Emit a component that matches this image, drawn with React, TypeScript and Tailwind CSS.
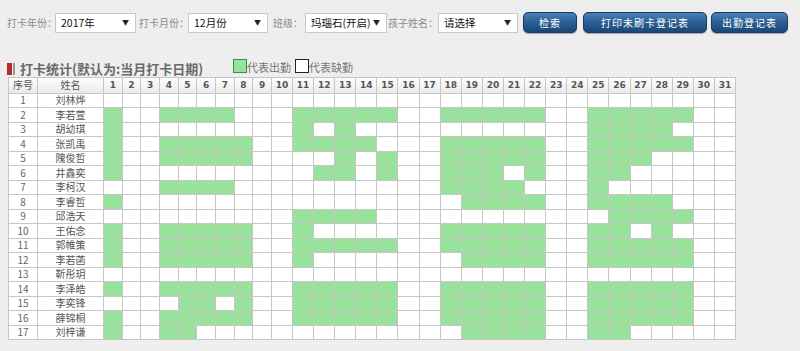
import React from "react";

const rows: [string, number[]][] = [
  ["刘林烨", []],
  ["李若萱", [1, 4, 5, 6, 7, 11, 12, 13, 14, 15, 18, 19, 20, 21, 22, 25, 26, 27, 28, 29]],
  ["胡幼琪", [1, 11, 13, 25, 26, 27, 28]],
  ["张凯禹", [1, 4, 5, 6, 7, 8, 11, 12, 13, 14, 18, 19, 20, 21, 22, 25, 26, 27, 28, 29]],
  ["隗俊哲", [1, 4, 5, 6, 7, 8, 13, 15, 18, 19, 20, 21, 22, 25, 26, 27]],
  ["井鑫奕", [1, 12, 13, 15, 18, 19, 20, 22, 25, 26]],
  ["李柯汉", [4, 5, 6, 7, 18, 19, 20, 21, 25]],
  ["李睿哲", [1, 19, 20, 21, 22, 25, 26, 27, 28]],
  ["邱浩天", [11, 12, 13, 14, 26, 27, 28, 29]],
  ["王佑念", [1, 4, 5, 6, 7, 8, 11, 18, 19, 20, 21, 22, 25, 26, 28]],
  ["郭帷策", [1, 4, 5, 6, 7, 8, 11, 12, 13, 14, 15, 18, 19, 20, 21, 22, 25, 26, 27, 28, 29]],
  ["李若菡", [1, 4, 5, 6, 7, 8, 11, 19, 20, 21, 22, 25, 26, 27, 28, 29]],
  ["靳彤玥", []],
  ["李泽皓", [1, 4, 5, 6, 7, 8, 11, 12, 13, 14, 15, 18, 19, 20, 21, 22, 25, 26, 27, 28, 29]],
  ["李奕锋", [5, 6, 8, 11, 12, 13, 14, 15, 18, 19, 20, 21, 22, 25, 26, 27, 28, 29]],
  ["薛锦桐", [1, 4, 5, 6, 7, 8, 11, 12, 13, 14, 15, 18, 19, 20, 21, 22, 25, 26, 27, 28, 29]],
  ["刘梓谦", [1, 4, 5, 19, 20, 21, 22, 25, 26]],
];

const days = Array.from({ length: 31 }, (_, i) => i + 1);

function Label({ text, width }: { text: string; width: string }) {
  return (
    <span className={`${width} shrink-0 whitespace-nowrap text-[10px] text-[#8a8a8a] leading-none`}>{text}</span>
  );
}

function Select({ value, width }: { value: string; width: string }) {
  return (
    <div
      className={`${width} shrink-0 h-[20px] bg-white border border-[#c9c9c9] flex items-center justify-between pl-[5px] pr-[6px] text-[10.5px] text-[#111] whitespace-nowrap`}
    >
      <span>{value}</span>
      <span className="text-[7px] text-[#222]">▼</span>
    </div>
  );
}

function Btn({ label, width }: { label: string; width: string }) {
  return (
    <div
      className={`${width} shrink-0 h-[21px] rounded-[5px] border border-[#1b3c63] bg-gradient-to-b from-[#4a80b8] via-[#2a5f95] to-[#1b4675] flex items-center justify-center text-white text-[10px] tracking-[1px] whitespace-nowrap shadow-[0_1px_1px_rgba(0,0,0,0.3)]`}
    >
      {label}
    </div>
  );
}

export default function App() {
  return (
    <div
      className="w-[800px] h-[351px] bg-[#eeeeee] overflow-hidden"
      style={{ fontFamily: '"Microsoft YaHei", "Noto Sans CJK SC", "Noto Sans", sans-serif' }}
    >
      <div className="flex items-center h-[21px] mt-[12px] pl-[7px]">
        <Label text="打卡年份：" width="w-[48px]" />
        <Select value="2017年" width="w-[81px]" />
        <div className="w-[3px] shrink-0" />
        <Label text="打卡月份：" width="w-[49px]" />
        <Select value="12月份" width="w-[80px]" />
        <div className="w-[5px] shrink-0" />
        <Label text="班级：" width="w-[32px]" />
        <Select value="玛瑙石(开启)" width="w-[82px]" />
        <div className="w-[1px] shrink-0" />
        <Label text="孩子姓名：" width="w-[50px]" />
        <Select value="请选择" width="w-[80px]" />
        <div className="w-[5px] shrink-0" />
        <Btn label="检索" width="w-[54px]" />
        <div className="w-[6px] shrink-0" />
        <Btn label="打印未刷卡登记表" width="w-[124px]" />
        <div className="w-[4px] shrink-0" />
        <Btn label="出勤登记表" width="w-[77px]" />
      </div>

      <div className="flex items-start mt-[26px] pl-[7px] h-[18px]">
        <div className="flex items-center h-[16px] pt-[3px]">
          <div className="w-[5px] h-[12px] bg-[#b22a2a]" />
          <div className="w-[2px] h-[12px] bg-[#9a9a9a] ml-[1px]" />
          <span className="ml-[5px] text-[13px] font-bold text-[#6a6a6a] leading-none whitespace-nowrap">
            打卡统计(默认为:当月打卡日期)
          </span>
        </div>
        <div className="flex items-center ml-[30px] text-[11px] text-[#777] leading-none whitespace-nowrap">
          <div className="w-[14px] h-[14px] bg-[#98e29b] border border-[#3f8a43]" />
          <span className="mt-[3px]">代表出勤</span>
          <div className="ml-[4px] w-[14px] h-[14px] bg-white border border-[#222]" />
          <span className="mt-[3px]">代表缺勤</span>
        </div>
      </div>

      <div className="pl-[8px]">
        <table className="border-collapse table-fixed w-[727px] bg-white text-[10px] text-[#666]">
          <colgroup>
            <col className="w-[29px]" />
            <col className="w-[66px]" />
            {days.map((d) => (
              <col key={d} className={d < 10 ? "w-[18.67px]" : "w-[21.1px]"} />
            ))}
          </colgroup>
          <thead>
            <tr className="h-[15.6px] bg-gradient-to-b from-[#fdfdfd] to-[#e9e9e9]">
              <th className="border border-[#c6c6c6] font-normal text-[#555] p-0 leading-none">序号</th>
              <th className="border border-[#c6c6c6] font-normal text-[#555] p-0 leading-none">姓名</th>
              {days.map((d) => (
                <th
                  key={d}
                  className="border border-[#c6c6c6] font-bold text-[#555] p-0 leading-none"
                  style={{ fontFamily: '"DejaVu Sans", "Noto Sans", sans-serif', fontSize: "9px" }}
                >
                  {d}
                </th>
              ))}
            </tr>
          </thead>
          <tbody>
            {rows.map(([name, greens], i) => (
              <tr key={i} className="h-[14.5px]">
                <td className="border border-[#c6c6c6] text-center p-0 leading-none">{i + 1}</td>
                <td className="border border-[#c6c6c6] text-center p-0 leading-none text-[#555]">{name}</td>
                {days.map((d) => (
                  <td
                    key={d}
                    className={`border border-[#c6c6c6] p-0 ${greens.includes(d) ? "bg-[#98e29b]" : ""}`}
                  />
                ))}
              </tr>
            ))}
          </tbody>
        </table>
      </div>
    </div>
  );
}
